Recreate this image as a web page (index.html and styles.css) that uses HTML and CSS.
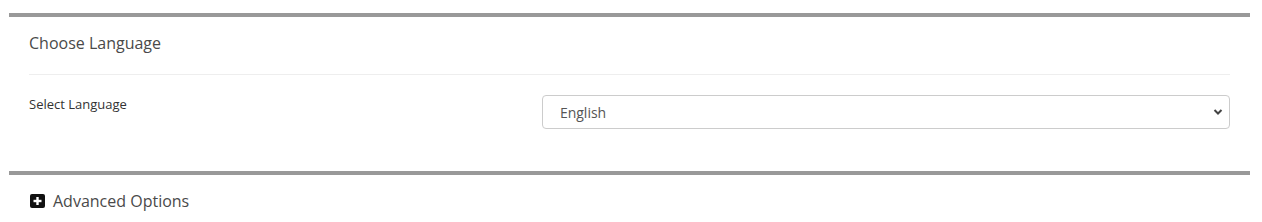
FILE: index.html
```html
<!DOCTYPE html>
<html>
<head>
    <meta name="viewport" content="width=device-width, initial-scale=1.0">
    <link rel="stylesheet" href="styles.css">
</head>
<body>

<div class="box">
    <div class="box-header">
        <h3 class="box-title">Choose Language</h3>
    </div>
    <div class="box-body">
        <div class="form-row">
            <div class="col-label">
                <label for="lang">Select Language</label>
            </div>
            <div class="col-field">
                <div class="select-wrap">
                    <select id="lang" class="form-control">
                        <option>English</option>
                    </select>
                    <svg class="caret" width="10" height="8" viewBox="0 0 10 8">
                        <path d="M1.5 2 L5 5.5 L8.5 2" fill="none" stroke="#444" stroke-width="2"/>
                    </svg>
                </div>
            </div>
        </div>
    </div>
</div>

<div class="box">
    <div class="box-toggle">
        <svg class="plus-icon" width="15" height="14" viewBox="0 0 15 14">
            <rect x="0" y="0" width="15" height="14" rx="2" fill="#111"/>
            <rect x="6.3" y="3" width="2.4" height="8" fill="#fff"/>
            <rect x="3.5" y="5.8" width="8" height="2.4" fill="#fff"/>
        </svg>
        <span>Advanced Options</span>
    </div>
</div>

</body>
</html>
```

FILE: styles.css
```css
* {box-sizing: border-box;}

body {
    margin: 0;
    padding: 13px 12px 0 9px;
    font-family: "Open Sans", Arial, sans-serif;
    background-color: #ffffff;
    color: #333;
}

.box {
    border-top: 4px solid #999999;
    margin-bottom: 20px;
}

.box-header {
    margin: 0 20px;
    padding: 14px 0 19px;
    border-bottom: 1px solid #eeeeee;
}

.box-title {
    margin: 0;
    font-size: 16px;
    font-weight: normal;
    line-height: 24px;
    color: #4a4a4a;
}

.box-body {
    padding: 20px 20px 22px;
}

.form-row {
    display: flex;
    margin: 0 -15px;
}

.col-label {
    width: 41.6667%;
    padding: 0 15px;
}

.col-field {
    width: 58.3333%;
    padding: 0 15px;
}

.col-label label {
    display: block;
    font-size: 13px;
    line-height: 18px;
    color: #333;
}

.select-wrap {
    position: relative;
}

.form-control {
    display: block;
    width: 100%;
    height: 34px;
    padding: 0 17px;
    font-family: "Open Sans", Arial, sans-serif;
    font-size: 14px;
    color: #555;
    background-color: #fff;
    border: 1px solid #cccccc;
    border-radius: 4px;
    appearance: none;
    -webkit-appearance: none;
}

.caret {
    position: absolute;
    right: 7px;
    top: 13px;
    pointer-events: none;
}

.box-toggle {
    display: flex;
    align-items: center;
    padding: 14px 20px 0 21px;
    font-size: 16px;
    line-height: 24px;
    color: #4a4a4a;
}

.plus-icon {
    margin-right: 8px;
}
```
